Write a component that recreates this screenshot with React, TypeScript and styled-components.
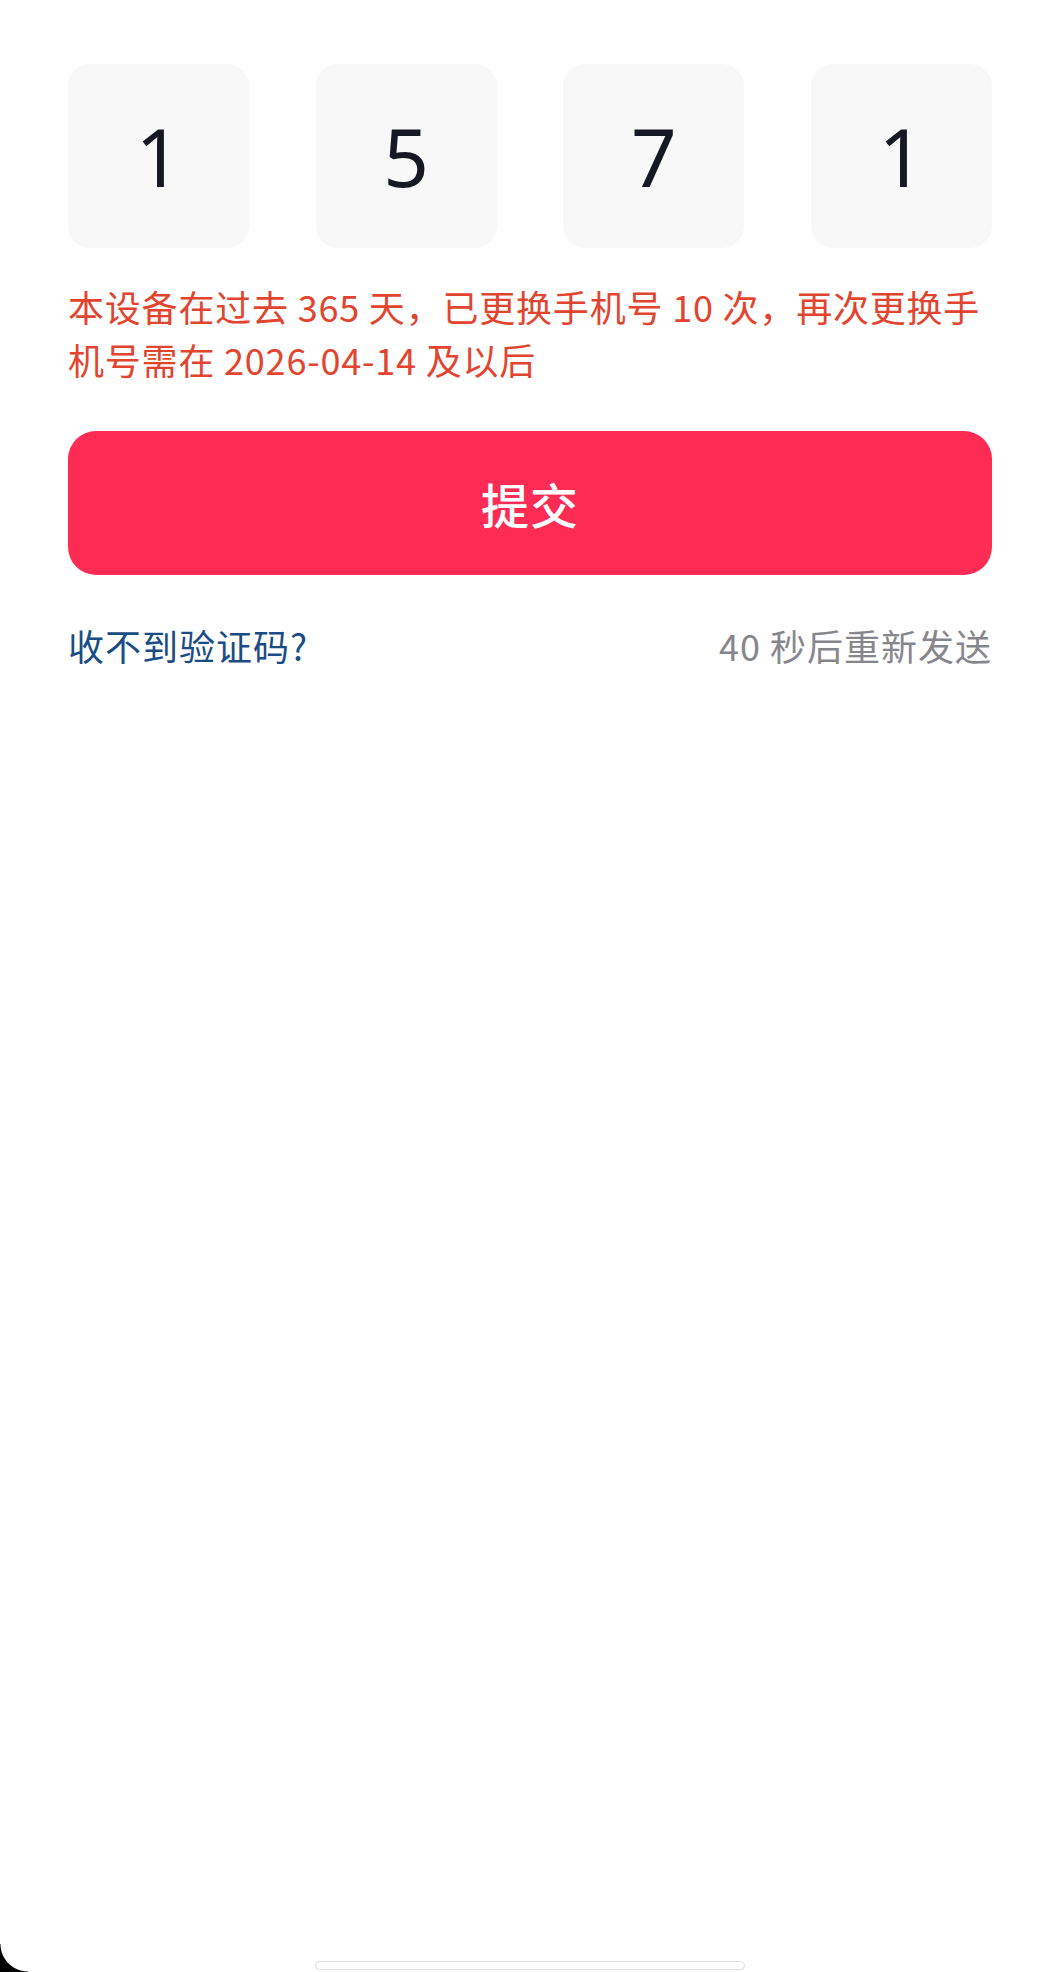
import React from "react";
import styled, { createGlobalStyle } from "styled-components";

const GlobalStyle = createGlobalStyle`
  html, body {
    margin: 0;
    padding: 0;
    background: #ffffff;
  }
  body {
    font-family: "Noto Sans", "Noto Sans CJK SC", sans-serif;
  }
  * { box-sizing: border-box; }
`;

const Screen = styled.div`
  position: relative;
  width: 1061px;
  min-height: 1972px;
  background: #ffffff;
  display: flex;
  flex-direction: column;
  padding: 64px 69px 0 68px;
  overflow: hidden;

  &::after {
    content: "";
    position: absolute;
    left: 0;
    bottom: 0;
    width: 28px;
    height: 28px;
    background: radial-gradient(circle at 28px 0, transparent 27px, #000 28px);
  }
`;

const CodeRow = styled.div`
  display: grid;
  grid-template-columns: repeat(4, 181px);
  justify-content: space-between;
`;

const CodeCell = styled.div`
  height: 184px;
  border-radius: 22px;
  background: #f8f8f8;
  display: flex;
  align-items: center;
  justify-content: center;
  font-family: "Noto Sans", "Noto Sans CJK SC", sans-serif;
  font-size: 80px;
  font-weight: 400;
  color: #161823;
  line-height: 1;
`;

const Notice = styled.p`
  margin: 32px 0 0;
  font-size: 36px;
  line-height: 53px;
  letter-spacing: 0.8px;
  color: #e2452f;
  font-family: "Noto Sans CJK SC", sans-serif;
`;

const SubmitButton = styled.button`
  margin-top: 45px;
  height: 144px;
  width: 100%;
  border: none;
  border-radius: 28px;
  background: #fe2c55;
  color: #ffffff;
  font-family: "Noto Sans CJK SC", sans-serif;
  font-size: 48px;
  font-weight: 500;
  letter-spacing: 1px;
  display: flex;
  align-items: center;
  justify-content: center;
  cursor: pointer;
`;

const FooterRow = styled.div`
  margin-top: 45px;
  display: flex;
  justify-content: space-between;
  align-items: center;
  height: 50px;
  font-family: "Noto Sans CJK SC", sans-serif;
  font-size: 36px;
  letter-spacing: 1px;
`;

const HelpLink = styled.span<{ $tone: "link" | "muted" }>`
  color: ${(p) => (p.$tone === "link" ? "#1a4d86" : "#86878c")};
`;

const HomeIndicator = styled.div`
  margin: auto auto 2px;
  width: 430px;
  height: 9px;
  border-radius: 5px;
  background: #ffffff;
  border: 1px solid #dcdcdc;
`;

const digits = ["1", "5", "7", "1"];

export default function App() {
  return (
    <>
      <GlobalStyle />
      <Screen>
        <CodeRow>
          {digits.map((d, i) => (
            <CodeCell key={i}>{d}</CodeCell>
          ))}
        </CodeRow>
        <Notice>
          本设备在过去 365 天，已更换手机号 10 次，再次更换手机号需在 2026-04-14 及以后
        </Notice>
        <SubmitButton>提交</SubmitButton>
        <FooterRow>
          <HelpLink $tone="link">收不到验证码?</HelpLink>
          <HelpLink $tone="muted">40 秒后重新发送</HelpLink>
        </FooterRow>
        <HomeIndicator />
      </Screen>
    </>
  );
}
